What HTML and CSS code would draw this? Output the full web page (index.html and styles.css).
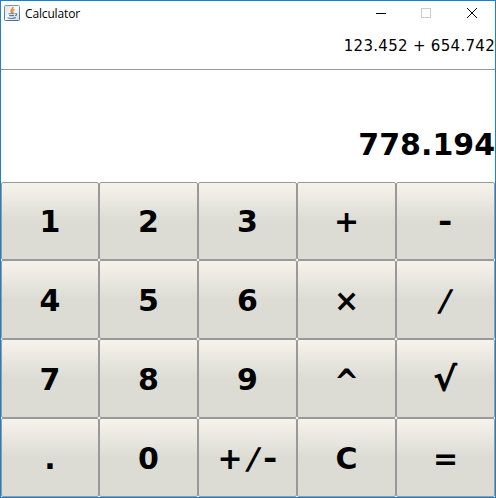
FILE: index.html
```
<!DOCTYPE html>
<html lang="en">
<head>
<meta charset="utf-8">
<title>Calculator</title>
<link rel="stylesheet" href="styles.css">
</head>
<body>
<main class="window">
  <header class="titlebar">
    <svg class="app-icon" width="16" height="16" viewBox="0 0 16 16">
      <defs><linearGradient id="tile" x1="0" y1="0" x2="0" y2="1"><stop offset="0" stop-color="#7f98a8"/><stop offset="1" stop-color="#527087"/></linearGradient>
      <linearGradient id="face" x1="0" y1="0" x2="1" y2="1"><stop offset="0" stop-color="#d9e0e4"/><stop offset=".5" stop-color="#fafbfc"/><stop offset="1" stop-color="#cbd7df"/></linearGradient></defs>
      <rect x=".5" y=".5" width="15" height="15" rx="1" fill="url(#face)" stroke="url(#tile)"/>
      <path d="M8.8 2C9.5 4 5.4 4.8 7.8 8M10.5 4.5C8.5 5.4 8.3 6 9.2 8" fill="none" stroke="#ef8a24" stroke-width="1.5"/>
      <path d="M4.5 8.8h6M5.2 10.6h4.8M3.5 12.8c2.5.8 6 .8 8.5-.2M11 8.8c2.5-.5 2 1.6 0 2" fill="none" stroke="#507ba0" stroke-width="1.1"/>
    </svg>
    <span class="title">Calculator</span>
    <svg class="controls" width="105" height="12" viewBox="0 0 105 12" fill="none" shape-rendering="crispEdges">
      <path d="M0 6.5h10" stroke="#000"/>
      <rect x="45.5" y="1.5" width="9" height="9" stroke="#ccc"/>
      <path d="M91 1l10 10M101 1l-10 10" stroke="#000" shape-rendering="auto"/>
    </svg>
  </header>
  <div class="expression">123.452 + 654.742</div>
  <div class="result">778.194</div>
  <div class="keys">
    <button>1</button><button>2</button><button>3</button><button>+</button><button><span class="minus">-</span></button>
    <button>4</button><button>5</button><button>6</button><button>×</button><button><span class="slash">/</span></button>
    <button>7</button><button>8</button><button>9</button><button><span class="caret">^</span></button><button><span class="root">√</span></button>
    <button>.</button><button>0</button><button>+<span class="slash">/</span><span class="minus">-</span></button><button>C</button><button>=</button>
  </div>
</main>
</body>
</html>
```
FILE: styles.css
```
* { box-sizing: border-box; }
body { margin: 0; background: #fff; color: #000; }
.window {
  width: 496px;
  height: 498px;
  border: 1px solid #1a80d3;
  display: flex;
  flex-direction: column;
  font-family: "DejaVu Sans", sans-serif;
}
.titlebar {
  height: 26px;
  display: flex;
  align-items: center;
  padding: 0 14px 2px 3px;
}
.title {
  font: 12px "Open Sans", sans-serif;
  letter-spacing: -.15px;
  margin-left: 5px;
}
.controls { margin-left: auto; }
.expression {
  height: 43px;
  border-bottom: 1px solid #999;
  font-size: 15px;
  letter-spacing: .3px;
  line-height: 39px;
  text-align: right;
}
.result {
  height: 112px;
  padding-top: 57px;
  font-size: 30px;
  font-weight: bold;
  line-height: 36px;
  text-align: right;
}
.keys {
  flex: 1;
  display: grid;
  grid-template-columns: 98px repeat(4, 99px);
  grid-template-rows: 78px repeat(3, 79px);
}
.keys button {
  margin: 0;
  padding: 0;
  border: 1px solid #999;
  border-radius: 2px;
  background: linear-gradient(#f6f3ec, #dcdcd4 50%);
  color: #000;
  font: bold 30px "DejaVu Sans", sans-serif;
}
.keys button:nth-child(n+6) { padding-top: 2px; }
.keys span { display: inline-block; }
.slash { width: .69em; transform: skewX(-12deg); }
.minus { width: .48em; transform: scaleX(1.15); }
.caret { transform: translateY(2px) scaleY(1.2); }
.root { font-weight: normal; -webkit-text-stroke: 1.2px #000; transform: translateY(-1px) scale(1.17, 1.1); }
```
